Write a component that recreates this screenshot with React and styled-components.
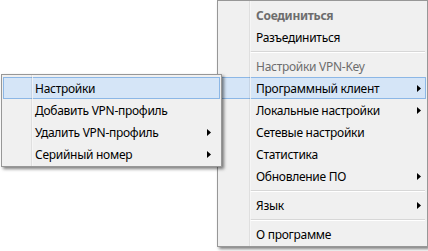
import React from "react";
import styled, { createGlobalStyle, css } from "styled-components";

const Global = createGlobalStyle`
  html, body { margin: 0; padding: 0; background: #ffffff; }
  body { font-family: "Noto Sans", "Open Sans", sans-serif; }
`;

const Stage = styled.div`
  position: relative;
  width: 428px;
  height: 251px;
  overflow: hidden;
  background: #ffffff;
`;

const Menu = styled.div`
  position: absolute;
  box-sizing: border-box;
  background: #f0f0f0;
  border: 1px solid #979797;
  box-shadow: 2px 2px 3px rgba(0, 0, 0, 0.5);
  display: flex;
  flex-direction: column;
  font-size: 12px;
  letter-spacing: -0.28px;
  color: #000;
  &::before {
    content: "";
    position: absolute;
    top: 0;
    bottom: 0;
    left: ${(p) => p.$gutter}px;
    width: 1px;
    background: rgba(0, 0, 0, 0.07);
    border-right: 1px solid rgba(255, 255, 255, 0.7);
    z-index: 2;
    pointer-events: none;
  }
`;

const MainMenu = styled(Menu)`
  left: 217px;
  top: 0;
  width: 211px;
  padding: 3px 1px 1px 1px;
`;

const SubMenu = styled(Menu)`
  left: 1px;
  top: 74px;
  width: 221px;
  padding: 2px 1px 1px 1px;
  z-index: 5;
`;

const Item = styled.div`
  position: relative;
  box-sizing: border-box;
  height: 22px;
  display: flex;
  align-items: center;
  padding-left: ${(p) => p.$indent}px;
  padding-right: ${(p) => p.$endGap}px;
  border: 1px solid transparent;
  white-space: nowrap;
  color: ${(p) => (p.$disabled ? "#6d6d6d" : "#000")};
  font-weight: ${(p) => (p.$bold ? 700 : 400)};
  ${(p) =>
    p.$active &&
    css`
      background: #d5e5f7;
      border-color: #8cb7e6;
    `}
`;

const Label = styled.span`
  flex: 1;
`;

const Arrow = styled.svg`
  width: 4px;
  height: 7px;
  flex: none;
`;

const Separator = styled.div`
  height: 7px;
  position: relative;
  &::after {
    content: "";
    position: absolute;
    top: 3px;
    left: ${(p) => p.$from}px;
    right: 1px;
    height: 1px;
    background: #d7d7d7;
    border-bottom: 1px solid #ffffff;
  }
`;

const ArrowIcon = () => (
  <Arrow viewBox="0 0 4 7">
    <polygon points="0,0 4,3.5 0,7" fill="#000" />
  </Arrow>
);

const mainItems = [
  { label: "Соединиться", bold: true, disabled: true },
  { label: "Разъединиться" },
  { sep: true },
  { label: "Настройки VPN-Key", disabled: true },
  { label: "Программный клиент", arrow: true, active: true },
  { label: "Локальные настройки", arrow: true },
  { label: "Сетевые настройки" },
  { label: "Статистика" },
  { label: "Обновление ПО", arrow: true },
  { sep: true },
  { label: "Язык", arrow: true },
  { sep: true },
  { label: "О программе" },
];

const subItems = [
  { label: "Настройки", active: true },
  { label: "Добавить VPN-профиль" },
  { label: "Удалить VPN-профиль", arrow: true },
  { label: "Серийный номер", arrow: true },
];

const renderItems = (items, indent, endGap, sepFrom) =>
  items.map((it, i) =>
    it.sep ? (
      <Separator key={i} $from={sepFrom} />
    ) : (
      <Item
        key={i}
        $indent={indent}
        $endGap={endGap}
        $disabled={it.disabled}
        $bold={it.bold}
        $active={it.active}
      >
        <Label>{it.label}</Label>
        {it.arrow && <ArrowIcon />}
      </Item>
    )
  );

export default function App() {
  return (
    <Stage>
      <Global />
      <MainMenu $gutter={31}>{renderItems(mainItems, 36, 4, 31)}</MainMenu>
      <SubMenu $gutter={29}>{renderItems(subItems, 31, 8, 29)}</SubMenu>
    </Stage>
  );
}
